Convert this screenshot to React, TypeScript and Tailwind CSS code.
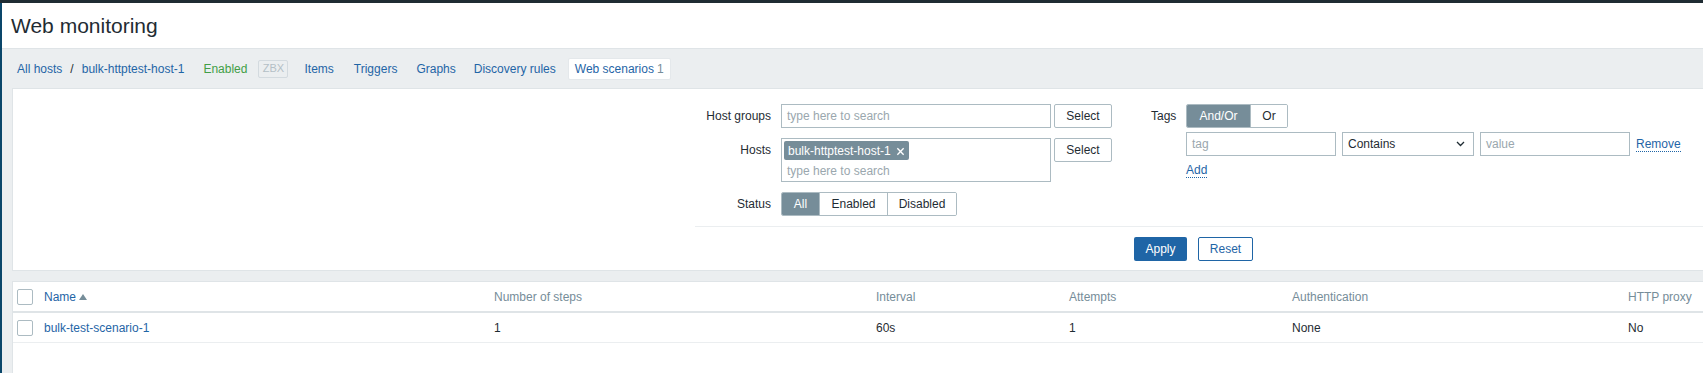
import { useState } from "react";

const LINK = "text-[#1f65a6]";
const BORDER_INPUT = "border border-[#acbbc2]";

export default function App() {
  const [status, setStatus] = useState("All");
  const [tagMode, setTagMode] = useState("And/Or");

  return (
    <div className="min-h-screen bg-white font-['Liberation_Sans',Arial,sans-serif] text-[12px] text-[#1f2c33]">
      <div className="h-[3px] bg-[#1f2c33]" />
      <div className="flex">
        <div className="w-[2px] shrink-0 bg-[#0a466a]" />
        <div className="flex-1 min-w-0">
          <header className="flex h-[45px] items-center pl-[9px]">
            <h1 className="text-[21px] leading-none">Web monitoring</h1>
          </header>

          <div className="border-t border-[#dfe4e7] bg-[#ebeef0] pl-[10px]">
            <nav className="flex h-[39px] items-center pl-[5px] whitespace-nowrap">
              <a className={LINK}>All hosts</a>
              <span className="px-[8px]">/</span>
              <a className={LINK}>bulk-httptest-host-1</a>
              <span className="ml-[19px] text-[#429e47]">Enabled</span>
              <span className="ml-[11px] flex h-[18px] w-[30px] items-center justify-center rounded-[2px] border border-[#d3dadf] bg-[#ebeef0] text-[11px] text-[#b4bfc6]">
                ZBX
              </span>
              <a className={`ml-[16px] ${LINK}`}>Items</a>
              <a className={`ml-[20px] ${LINK}`}>Triggers</a>
              <a className={`ml-[19px] ${LINK}`}>Graphs</a>
              <a className={`ml-[18px] ${LINK}`}>Discovery rules</a>
              <span className="ml-[12px] flex h-[22px] items-center rounded-[2px] border border-[#e4e8eb] bg-white px-[6px]">
                <a className={LINK}>Web scenarios</a>
                <span className="ml-[3px] text-[#768d99]">1</span>
              </span>
            </nav>

            <div className="border border-r-0 border-[#dfe4e7] bg-white">
              <div className="ml-[682px] pt-[15px] pb-[9px]">
                <div className="flex">
                  <div className="w-[456px] shrink-0">
                    <div className="grid grid-cols-[76px_auto] items-start gap-x-[10px] gap-y-[10px]">
                      <label className="pt-[5px] text-right leading-[14px]">Host groups</label>
                      <div className="flex gap-[3px]">
                        <div className={`flex h-[24px] w-[270px] items-center px-[5px] ${BORDER_INPUT} text-[#9aa7ae]`}>
                          type here to search
                        </div>
                        <SelectButton />
                      </div>

                      <label className="pt-[5px] text-right leading-[14px]">Hosts</label>
                      <div className="flex gap-[3px]">
                        <div className={`h-[44px] w-[270px] ${BORDER_INPUT} px-[2px] pt-[2px]`}>
                          <span className="inline-flex h-[19px] items-center gap-[5px] rounded-[2px] bg-[#768d99] px-[4px] text-white">
                            bulk-httptest-host-1
                            <svg width="9" height="9" viewBox="0 0 10 10" className="mt-[1px]">
                              <path d="M1.5 1.5l7 7M8.5 1.5l-7 7" stroke="white" strokeWidth="1.5" />
                            </svg>
                          </span>
                          <div className="pl-[3px] pt-[2px] text-[#9aa7ae]">type here to search</div>
                        </div>
                        <SelectButton />
                      </div>

                      <label className="pt-[5px] text-right leading-[14px]">Status</label>
                      <Segmented
                        options={["All", "Enabled", "Disabled"]}
                        widths={["w-[37px]", "w-[68px]", "w-[69px]"]}
                        value={status}
                        onChange={setStatus}
                      />
                    </div>
                  </div>

                  <div className="grid grid-cols-[25px_auto] gap-x-[10px]">
                    <label className="pt-[5px] leading-[14px]">Tags</label>
                    <div>
                      <Segmented
                        options={["And/Or", "Or"]}
                        widths={["w-[63px]", "w-[37px]"]}
                        value={tagMode}
                        onChange={setTagMode}
                      />
                      <div className="mt-[4px] flex items-center gap-[6px]">
                        <div className={`flex h-[24px] w-[150px] items-center px-[5px] ${BORDER_INPUT} text-[#9aa7ae]`}>
                          tag
                        </div>
                        <div className={`flex h-[24px] w-[132px] items-center justify-between pl-[5px] pr-[8px] ${BORDER_INPUT}`}>
                          <span>Contains</span>
                          <svg width="9" height="6" viewBox="0 0 9 6">
                            <path d="M1 1l3.5 3.5L8 1" fill="none" stroke="#1f2c33" strokeWidth="1.3" />
                          </svg>
                        </div>
                        <div className={`flex h-[24px] w-[150px] items-center px-[5px] ${BORDER_INPUT} text-[#9aa7ae]`}>
                          value
                        </div>
                        <a className={`${LINK} border-b border-dotted border-[#1f65a6] leading-[14px]`}>Remove</a>
                      </div>
                      <div className="mt-[5px]">
                        <a className={`${LINK} border-b border-dotted border-[#1f65a6] leading-[14px]`}>Add</a>
                      </div>
                    </div>
                  </div>
                </div>

                <div className="mt-[10px] border-t border-[#ebeef0] pt-[10px]">
                  <div className="ml-[439px] flex gap-[11px]">
                    <button className="h-[24px] w-[53px] rounded-[2px] bg-[#1f65a6] text-white">Apply</button>
                    <button className="h-[24px] w-[55px] rounded-[2px] border border-[#1f65a6] bg-white text-[#1f65a6]">
                      Reset
                    </button>
                  </div>
                </div>
              </div>
            </div>

            <div className="h-[10px]" />

            <div className="border border-r-0 border-b-0 border-[#dfe4e7] bg-white">
              <div className="grid h-[31px] grid-cols-[31px_450px_382px_193px_223px_336px_1fr] items-center border-b-2 border-[#dfe4e7] text-[#768d99]">
                <Checkbox />
                <span className="flex items-center gap-[3px]">
                  <a className={LINK}>Name</a>
                  <svg width="8" height="6" viewBox="0 0 8 6">
                    <path d="M0 6L4 0l4 6z" fill="#768d99" />
                  </svg>
                </span>
                <span>Number of steps</span>
                <span>Interval</span>
                <span>Attempts</span>
                <span>Authentication</span>
                <span>HTTP proxy</span>
              </div>
              <div className="grid h-[30px] grid-cols-[31px_450px_382px_193px_223px_336px_1fr] items-center border-b border-[#ebeef0]">
                <Checkbox />
                <a className={LINK}>bulk-test-scenario-1</a>
                <span>1</span>
                <span>60s</span>
                <span>1</span>
                <span>None</span>
                <span>No</span>
              </div>
              <div className="h-[40px]" />
            </div>
          </div>
        </div>
      </div>
    </div>
  );
}

function SelectButton() {
  return (
    <button className={`h-[24px] w-[58px] rounded-[2px] ${BORDER_INPUT} bg-white`}>Select</button>
  );
}

function Checkbox() {
  return (
    <span className="ml-[4px] block h-[16px] w-[16px] rounded-[2px] border border-[#acbbc2] bg-white" />
  );
}

interface SegmentedProps {
  options: string[];
  widths: string[];
  value: string;
  onChange: (v: string) => void;
}

function Segmented({ options, widths, value, onChange }: SegmentedProps) {
  return (
    <div className="flex h-[24px] w-max overflow-hidden rounded-[2px] border border-[#acbbc2]">
      {options.map((o, i) => (
        <button
          key={o}
          onClick={() => onChange(o)}
          className={`${widths[i]} ${i > 0 ? "border-l border-[#acbbc2]" : ""} ${
            value === o ? "bg-[#768d99] text-white" : "bg-white"
          }`}
        >
          {o}
        </button>
      ))}
    </div>
  );
}
